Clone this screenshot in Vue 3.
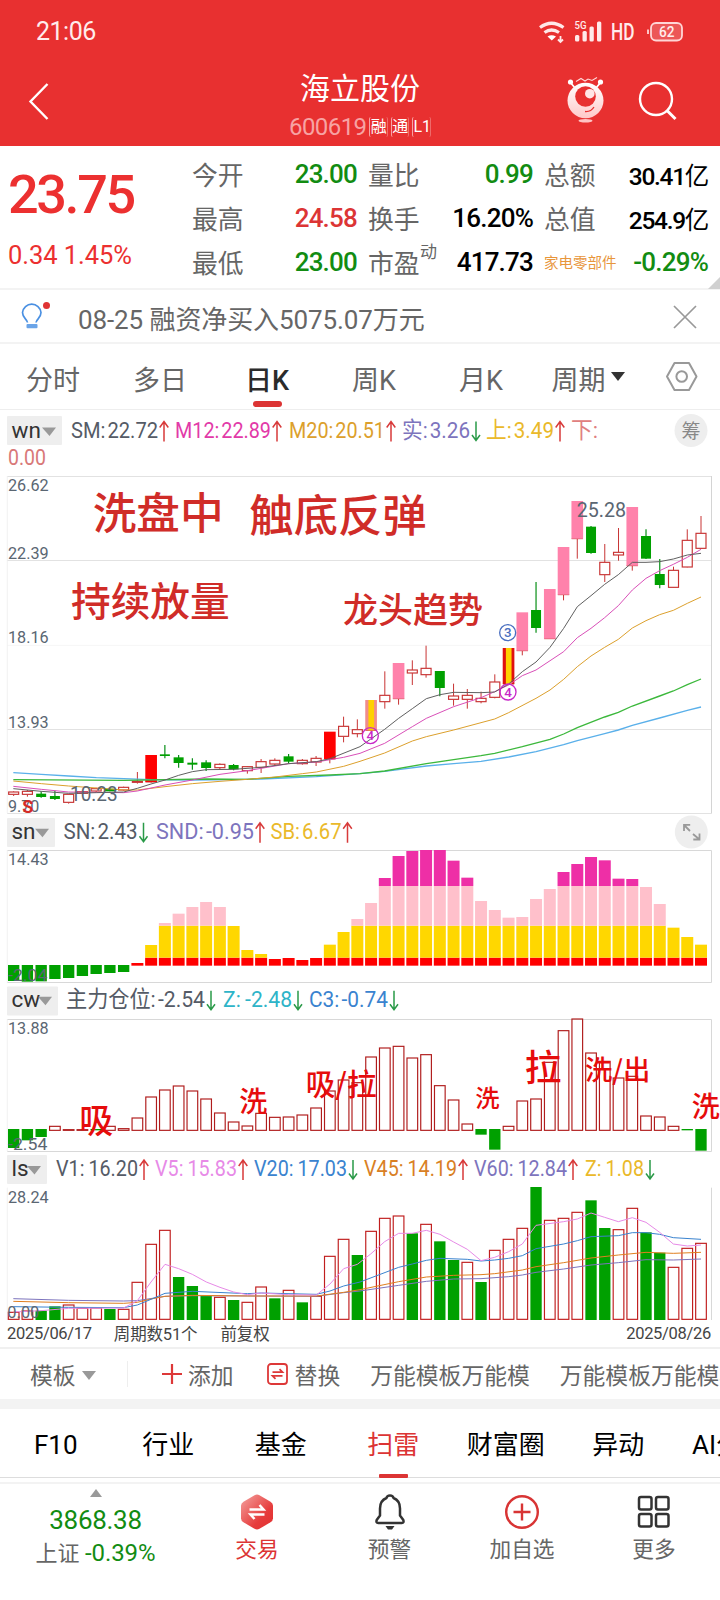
<script setup>
// 三倍密度的画布坐标：3 个单位 = 1px
const STEP = 41.24;
const cx = (i) => 41 + i * STEP;

const quotes = [
  [
    { label: "今开", value: "23.00", tone: "down" },
    { label: "量比", value: "0.99", tone: "down" },
    { label: "总额", value: "30.41", unit: "亿", tone: "flat" },
  ],
  [
    { label: "最高", value: "24.58", tone: "up" },
    { label: "换手", value: "16.20%", tone: "flat" },
    { label: "总值", value: "254.9", unit: "亿", tone: "flat" },
  ],
  [
    { label: "最低", value: "23.00", tone: "down" },
    { label: "市盈", sup: "动", value: "417.73", tone: "flat" },
    { label: "家电零部件", value: "-0.29%", tone: "down", sector: true },
  ],
];

const periods = ["分时", "多日", "日K", "周K", "月K", "周期"];
const details = ["F10", "行业", "基金", "扫雷", "财富圈", "异动", "AI分析"];

// 指标栏：x 起点，w 文本宽度，dir 箭头方向
const heads = {
  wn: {
    view: "0 410 720 64",
    height: 64,
    name: "wn",
    pill: [7, 416, 55],
    base: 437.5,
    items: [
      { x: 71, w: 87, t: "SM:\u200a22.72", c: "#555b66", dir: "up" },
      { x: 175, w: 96, t: "M12:\u200a22.89", c: "#e23aa8", dir: "up" },
      { x: 289, w: 96, t: "M20:\u200a20.51", c: "#dca02c", dir: "up" },
      { x: 402, w: 68, t: "实:\u200a3.26", c: "#7d74bd", dir: "down" },
      { x: 486, w: 68, t: "上:\u200a3.49", c: "#eab92a", dir: "up" },
      { x: 571, w: 27, t: "下:", c: "#e08080" },
    ],
  },
  sn: {
    view: "0 814 720 35",
    height: 35,
    name: "sn",
    pill: [7, 818, 48],
    base: 838.7,
    items: [
      { x: 63.5, w: 74, t: "SN:\u200a2.43", c: "#555b66", dir: "down" },
      { x: 156, w: 98, t: "SND:\u200a-0.95", c: "#7d74bd", dir: "up" },
      { x: 270.5, w: 71, t: "SB:\u200a6.67", c: "#eab92a", dir: "up" },
    ],
  },
  cw: {
    view: "0 984 720 34",
    height: 34,
    name: "cw",
    pill: [7, 986.5, 51],
    base: 1006.7,
    items: [
      { x: 66, w: 139, t: "主力仓位:\u200a-2.54", c: "#555b66", dir: "down" },
      { x: 223, w: 69, t: "Z:\u2009-2.48", c: "#2eb4c8", dir: "down" },
      { x: 309, w: 79, t: "C3:\u200a-0.74", c: "#3a83cf", dir: "down" },
    ],
  },
  ls: {
    view: "0 1153 720 34",
    height: 34,
    name: "ls",
    pill: [7, 1155, 40],
    base: 1176,
    items: [
      { x: 56, w: 82, t: "V1:\u200916.20", c: "#555b66", dir: "up" },
      { x: 155, w: 82, t: "V5:\u200915.83", c: "#e78ae7", dir: "up" },
      { x: 254, w: 93, t: "V20:\u200917.03", c: "#3a83cf", dir: "down" },
      { x: 364, w: 93, t: "V45:\u200914.19", c: "#d97f24", dir: "up" },
      { x: 474, w: 93, t: "V60:\u200912.84", c: "#7d74bd", dir: "up" },
      { x: 585, w: 59, t: "Z:\u20091.08", c: "#eab92a", dir: "down" },
    ],
  },
};

// u 阳线 d 阴线 r 涨停 p 连板 y 信号 —— [最高, 实体上, 实体下, 最低, 类型]
const candles = [
  [964, 966, 973, 978, "u"], [960, 964, 973, 980, "u"], [964, 971, 981, 983, "d"],
  [962, 978, 987, 990, "d"], [972, 973, 997, 1001, "u"], [965, 965, 970, 971, "u"],
  [953, 956, 963, 968, "u"], [955, 956, 964, 964, "d"], [950, 952, 960, 962, "u"],
  [906, 934, 937, 941, "u"], [855, 855, 936, 938, "r"], [825, 853, 858, 865, "d"],
  [855, 862, 879, 893, "d"], [865, 878, 884, 899, "d"], [871, 877, 894, 903, "d"],
  [880, 883, 893, 899, "u"], [882, 885, 898, 901, "d"], [888, 890, 902, 911, "u"],
  [867, 875, 892, 909, "u"], [865, 871, 882, 887, "u"], [852, 859, 875, 882, "d"],
  [867, 871, 881, 884, "u"], [858, 865, 876, 888, "u"], [785, 785, 867, 880, "r"],
  [740, 769, 799, 817, "u"], [748, 779, 791, 802, "u"], [690, 690, 781, 784, "y"],
  [604, 676, 695, 716, "u"], [579, 579, 686, 704, "p"], [571, 600, 609, 645, "u"],
  [527, 595, 614, 623, "u"], [603, 603, 654, 679, "d"], [641, 678, 688, 707, "u"],
  [657, 676, 688, 716, "u"], [665, 685, 695, 700, "u"], [613, 636, 682, 685, "u"],
  [534, 534, 642, 642, "yr"], [427, 427, 542, 556, "p"], [336, 420, 474, 488, "d"],
  [357, 357, 506, 506, "p"], [231, 231, 374, 391, "p"], [93, 93, 206, 266, "p"],
  [168, 170, 249, 251, "d"], [222, 277, 314, 336, "u"], [174, 247, 255, 272, "u"],
  [111, 111, 287, 302, "p"], [178, 198, 266, 267, "d"], [267, 312, 345, 355, "d"],
  [290, 301, 352, 353, "u"], [178, 211, 291, 292, "u"], [138, 190, 235, 237, "u"],
].map(([high, top, bottom, low, kind], i) => ({ x: cx(i), high, top, bottom, low, kind }));

const fills = { r: "#ff0000", p: "#ff82ab", y: "#f08c8c", yr: "#e01010" };

const averages = [
  {
    c: "#5ab0ea", w: 4,
    p: "40,908 124,913 206,918 289,923 371,926 453,929 577,930 701,929 784,927 949,920 1080,911 1154,904 1279,888 1361,881 1443,874 1526,861 1608,845 1691,824 1732,812 1814,791 1855,780 1897,766 1979,744 2062,721 2103,711",
  },
  {
    c: "#3cb83c", w: 4,
    p: "40,929 371,931 619,927 742,928 866,919 990,915 1080,911 1154,903 1279,881 1361,869 1443,857 1484,850 1567,830 1650,808 1691,792 1732,773 1814,741 1855,727 1897,708 1979,678 2020,663 2062,644 2103,627",
  },
  {
    c: "#dca02c", w: 3,
    p: "40,933 124,941 206,948 289,954 371,960 412,960 495,950 577,941 660,934 742,928 825,921 907,911 949,906 1031,889 1080,874 1154,849 1237,813 1279,800 1361,780 1484,747 1526,728 1608,685 1650,660 1691,628 1732,590 1773,558 1814,532 1855,508 1897,474 1938,452 1979,434 2020,421 2062,400 2103,381",
  },
  {
    c: "#d94fb8", w: 3,
    p: "40,949 124,958 206,966 371,968 412,963 495,945 577,930 660,913 742,902 825,888 866,881 949,876 1031,862 1080,850 1154,820 1237,770 1279,745 1361,710 1443,683 1484,665 1526,645 1567,617 1608,600 1691,545 1732,503 1773,475 1814,443 1855,407 1897,360 1938,325 1979,302 2020,283 2062,262 2103,238",
  },
  {
    c: "#606060", w: 3,
    p: "40,956 124,964 206,970 289,968 371,966 412,955 453,942 495,930 536,916 577,905 619,899 701,898 784,892 866,881 949,875 990,866 1080,830 1111,808 1154,778 1196,745 1237,716 1279,686 1320,674 1361,667 1443,668 1484,666 1526,642 1567,605 1608,576 1650,532 1691,475 1732,410 1773,377 1814,343 1855,314 1897,277 1938,277 1979,275 2020,267 2062,255 2103,250",
  },
];

const prices = [
  { y: 62, t: "26.62" },
  { y: 266, t: "22.39" },
  { y: 519, t: "18.16" },
  { y: 773, t: "13.93" },
];

const slogans = [
  { x: 278, y: 177, s: 131, t: "洗盘中" },
  { x: 748, y: 185, s: 133, t: "触底反弹" },
  { x: 213, y: 437, s: 119, t: "持续放量" },
  { x: 1029, y: 458, s: 105, t: "龙头趋势" },
];

// 分层柱：红、黄、粉、洋红
const layers = [
  [443, 467, "#ff0000"],
  [347, 443, "#ffd700"],
  [228, 347, "#ffc0cb"],
  [0, 228, "#ee2fa6"],
];
const snTops = [
  459, 405, 339, 311, 291, 276, 291, 348, 420, 432, 447, 444, 450, 444, 404, 366, 327, 279, 204,
  138, 123, 120, 120, 152, 203, 273, 300, 323, 321, 267, 237, 186, 162, 141, 151, 206, 207, 231,
  282, 353, 381, 404,
];
const snLows = [513, 515, 514, 507, 504, 498, 492, 489, 486];
const snBars = snTops.flatMap((top, i) =>
  layers
    .filter(([, b]) => top < b)
    .map(([a, b, c]) => ({ x: cx(i + 9) - 18, y: Math.max(a, top), b, c })),
);

// 负数表示绿色下挂柱
const cwBars = [
  -1014, -991, -981, 949, 959, 959, -961, 949, 956, 924, 861, 840, 828, 843, 867, 909, 936, 948,
  910, 922, 921, 915, 894, 843, 810, 818, 741, 714, 709, 744, 734, 827, 870, 942, -974, -1019, 949,
  873, 867, 757, 662, 627, 729, 754, 804, 799, 918, 921, 949, -961, -1022,
].map((v, i) => ({ x: cx(i), v: Math.abs(v), down: v < 0 }));

const cwNotes = [
  { x: 238, y: 970, s: 102, t: "吸" },
  { x: 718, y: 907, s: 84, t: "洗" },
  { x: 917, y: 856, s: 89, t: "吸/拉" },
  { x: 1426, y: 891, s: 73, t: "洗" },
  { x: 1574, y: 812, s: 110, t: "拉" },
  { x: 1755, y: 811, s: 82, t: "洗/出" },
  { x: 2075, y: 921, s: 84, t: "洗" },
];

// 负数表示阴量
const volumes = [
  487, 483, -482, -469, 465, 475, 474, -477, 478, 397, 283, 241, -381, -408, -438, 442, -450, 457,
  411, -445, 421, -457, 439, 319, 268, -315, 244, 205, 198, -250, 223, -274, -330, 337, -396, 301,
  268, 235, -111, 211, 205, 187, -151, -234, 239, 175, -247, -308, 352, 295, 280,
].map((v, i) => ({ x: cx(i), v: Math.abs(v), down: v < 0 }));

const volumeLines = [
  {
    c: "#7d74bd",
    p: "40,446 206,451 371,453 412,452 495,439 577,437 949,439 1031,428 1080,423 1196,406 1279,394 1361,387 1443,386 1526,380 1567,375 1608,367 1691,357 1773,345 1855,338 1938,329 2020,330 2103,327",
  },
  {
    c: "#e08020",
    p: "40,454 206,458 371,460 412,457 453,447 495,439 577,436 742,438 949,438 1031,427 1080,419 1196,395 1279,381 1361,376 1443,374 1484,371 1567,360 1608,350 1691,338 1773,324 1855,315 1938,307 2020,310 2103,307",
  },
  {
    c: "#3a83cf",
    p: "40,470 206,472 371,473 412,465 453,448 495,430 577,424 742,431 784,429 949,433 990,423 1031,408 1080,396 1196,352 1237,342 1279,331 1320,325 1402,328 1443,333 1484,330 1526,325 1567,317 1608,296 1691,282 1732,272 1773,260 1855,257 1897,248 1938,248 1979,253 2020,263 2103,268",
  },
  {
    c: "#e78ae7",
    p: "40,486 124,482 206,475 371,474 412,452 453,396 495,343 536,356 577,373 619,396 660,412 701,426 742,434 784,429 866,434 949,435 990,402 1031,356 1072,343 1112,312 1154,275 1196,250 1237,250 1279,241 1320,253 1361,276 1402,298 1443,332 1484,322 1526,305 1567,282 1608,226 1691,215 1732,207 1773,189 1814,202 1855,215 1897,203 1938,217 1979,247 2020,282 2062,288 2103,285",
  },
];

const panels = ["wn", "sn", "cw", "ls"];
</script>

<template>
  <div class="page">
    <header class="top">
      <div class="status">
        <span class="clock">21:06</span>
        <svg class="signals" width="148" height="26" viewBox="538 17 148 26">
          <g fill="none" stroke="#ffe8e8" stroke-width="3.2">
            <path d="M540 26.5Q551.5 18 563.5 26.5" />
            <path d="M544.5 31.5Q551.5 26.5 559 31.5" />
          </g>
          <path d="M547.5 35.5Q551.5 33 556 35.5L551.8 39.5Z" fill="#fff" />
          <path d="M560.5 35v6m-2.500-2.500l2.500 2.500l2.500-2.500" stroke="#ffe8e8" stroke-width="1.800" fill="none" />
          <text x="574.500" y="28" font-size="10" textLength="12" lengthAdjust="spacingAndGlyphs" class="st">5G</text>
          <g fill="#ffeaea">
            <rect x="575" y="34" width="4.300" height="6.500" rx="1.500" />
            <rect x="582.500" y="30" width="4.300" height="10.500" rx="1.500" />
            <rect x="589.500" y="25.500" width="4.300" height="15" rx="1.500" />
            <rect x="597" y="20.500" width="4.300" height="20" rx="1.500" />
          </g>
          <text x="611" y="39" font-size="23.500" textLength="23.500" lengthAdjust="spacingAndGlyphs" class="st">HD</text>
          <rect x="651" y="22" width="31" height="17.500" rx="5" fill="#ffffff30" stroke="#ffd6d6" stroke-width="1.800" />
          <path d="M648 28.500v4.500" stroke="#ffd6d6" stroke-width="1.800" />
          <text x="659" y="36" font-size="14.500" textLength="15.500" lengthAdjust="spacingAndGlyphs" class="st">62</text>
        </svg>
      </div>
      <div class="nav">
        <svg class="back" width="24" height="40" viewBox="0 0 24 40">
          <path d="M19.500 3L2.500 20.500L19.500 38" fill="none" stroke="#fff" stroke-width="2.400" />
        </svg>
        <div class="title">
          <h1>海立股份</h1>
          <p>600619<i>融</i><i>通</i><i>L1</i></p>
        </div>
        <svg class="robot" width="40" height="50" viewBox="567 76 40 50">
          <defs>
            <linearGradient id="egg" x1="0" y1="0" x2="0" y2="1">
              <stop offset="0" stop-color="#fff" />
              <stop offset="1" stop-color="#ffc9c9" />
            </linearGradient>
          </defs>
          <path d="M571 83l5 6M602 83l-5 6" stroke="#fff" stroke-width="1.800" />
          <circle cx="571.500" cy="83" r="2.600" fill="#fff" />
          <circle cx="601.500" cy="83" r="2.600" fill="#fff" />
          <path d="M577 82.500l5-3l4 2.500l3-2l4 1.500l5-3" fill="none" stroke="#ffd9d9" stroke-width="1.100" />
          <ellipse cx="586.500" cy="101.500" rx="18" ry="17.800" fill="url(#egg)" />
          <circle cx="586.500" cy="97.500" r="10.300" fill="#e83030" />
          <circle cx="590.800" cy="94.700" r="4.800" fill="#ffe6e6" />
          <path d="M586 112.500q6 .500 9-4.500" fill="none" stroke="#e83030" stroke-width="1.300" />
          <ellipse cx="586.500" cy="121.800" rx="7" ry="1.700" fill="#ffc4c4" />
        </svg>
        <svg class="search" width="42" height="42" viewBox="0 0 42 42">
          <circle cx="19" cy="19" r="16" fill="none" stroke="#fff" stroke-width="2.400" />
          <path d="M30 30.500l8.500 8.500" stroke="#fff" stroke-width="3" />
        </svg>
      </div>
    </header>

    <section class="quote">
      <div class="price">
        <strong>23.75</strong>
        <span>0.34 1.45%</span>
      </div>
      <div class="table">
        <template v-for="(row, r) in quotes" :key="r">
          <div v-for="cell in row" :key="cell.label" class="cell">
            <span :class="['label', { sector: cell.sector }]">{{ cell.label }}<sup v-if="cell.sup">{{ cell.sup }}</sup></span>
            <span :class="['value', cell.tone, { small: cell.unit }]">{{ cell.value }}<i v-if="cell.unit">{{ cell.unit }}</i></span>
          </div>
        </template>
      </div>
      <i class="corner" />
    </section>

    <section class="notice">
      <svg width="32" height="32" viewBox="20 301 32 32">
        <path d="M27.500 323.500C27 320 22.500 319 22.500 313.500A9.300 9.300 0 0 1 41 313.500C41 319 36.500 320 36 323.500" fill="none" stroke="#4a90e2" stroke-width="1.700" />
        <rect x="26.500" y="325" width="11" height="4.200" rx="1" fill="#6aa4e8" />
        <circle cx="46.500" cy="306.500" r="3.500" fill="#e03434" />
      </svg>
      <p>08-25 融资净买入5075.07万元</p>
      <svg class="close" width="24" height="24" viewBox="0 0 24 24">
        <path d="M1 1L23 23M23 1L1 23" stroke="#999" stroke-width="1.700" />
      </svg>
    </section>

    <nav class="periods">
      <span v-for="p in periods" :key="p" :class="{ on: p === '日K' }">
        {{ p }}<i v-if="p === '周期'" class="caret" />
      </span>
      <svg width="34" height="32" viewBox="0 0 34 32">
        <path d="M9.500 2h14.500l7.500 13.500l-7.500 13.500h-14.500l-7.500-13.500z" fill="none" stroke="#999" stroke-width="2" stroke-linejoin="round" />
        <circle cx="16.700" cy="15.500" r="5.300" fill="none" stroke="#999" stroke-width="2" />
      </svg>
    </nav>

    <template v-for="id in panels" :key="id">
      <svg class="block" width="720" :height="heads[id].height" :viewBox="heads[id].view">
        <rect :x="heads[id].pill[0]" :y="heads[id].pill[1]" :width="heads[id].pill[2]" height="29" rx="1" fill="#eee" />
        <text :x="heads[id].pill[0] + 4.500" :y="heads[id].base" font-size="22.500" fill="#333">{{ heads[id].name }}</text>
        <path
          :transform="`translate(${heads[id].pill[0] + heads[id].pill[2] - 20} ${heads[id].base - 10})`"
          d="M0 0H14L7.500 8.500Z"
          fill="#999"
        />
        <g v-for="it in heads[id].items" :key="it.t">
          <text :x="it.x" :y="heads[id].base" :textLength="it.w" lengthAdjust="spacingAndGlyphs" class="legend" :fill="it.c">{{ it.t }}</text>
          <g v-if="it.dir" :transform="`translate(${it.x + it.w + 6} ${heads[id].base - 6})`" fill="none" stroke-width="1.500">
            <path v-if="it.dir === 'up'" d="M0 10V-10M-4.300-4L0-10L4.300-4" stroke="#d83a3a" />
            <path v-else d="M0-10V9M-4 3.500L0 9L4 3.500" stroke="#2a9a48" />
          </g>
        </g>
        <g v-if="id === 'wn'">
          <text x="8" y="465" textLength="38" lengthAdjust="spacingAndGlyphs" class="legend" fill="#d87878">0.00</text>
          <circle cx="691" cy="430.500" r="16.500" fill="#eee" />
          <text x="681.500" y="438" font-size="19" fill="#888">筹</text>
        </g>
        <g v-if="id === 'sn'">
          <circle cx="691.300" cy="832" r="16.500" fill="#eee" />
          <path d="M690 831l-6-6m0 6v-6.200h6.200M693 834l6.500 5.500m0-6v6h-6.200" fill="none" stroke="#999" stroke-width="1.800" />
        </g>
      </svg>

      <!-- K线主图 -->
      <svg v-if="id === 'wn'" class="block" width="720" height="340" viewBox="0 12 2160 1020">
        <path d="M22 19.500H2135M22 271.500H2135M22 778.500H2135M22 1030.500H2135" stroke="#e2e2e2" stroke-width="3" />
        <path d="M22 526H2135" stroke="#f6f6f6" stroke-width="3" />
        <path d="M22 18V1030" stroke="#ececec" stroke-width="2" />
        <path d="M2134.500 18V1030" stroke="#d4d4d4" stroke-width="3" />
        <text v-for="p in prices" :key="p.t" x="24" :y="p.y" class="axis" textLength="122" lengthAdjust="spacingAndGlyphs">{{ p.t }}</text>
        <text x="24" y="1025" class="axis" textLength="94" lengthAdjust="spacingAndGlyphs">9.70</text>
        <g v-for="(k, i) in candles" :key="i">
          <template v-if="k.kind === 'u'">
            <path :d="`M${k.x} ${k.high}V${k.top}M${k.x} ${k.bottom}V${k.low}`" stroke="#c83434" stroke-width="3" />
            <rect :x="k.x - 15" :y="k.top" width="30" :height="k.bottom - k.top" fill="#fff" stroke="#c83434" stroke-width="3.500" />
          </template>
          <template v-else-if="k.kind === 'd'">
            <path :d="`M${k.x} ${k.high}V${k.low}`" stroke="#008c10" stroke-width="3.500" />
            <rect :x="k.x - 15" :y="k.top" width="30" :height="k.bottom - k.top" fill="#00a000" />
          </template>
          <template v-else>
            <path :d="`M${k.x} ${k.bottom}V${k.low}M${k.x - 17} ${k.bottom}h34`" stroke="#c83434" stroke-width="3" />
            <rect :x="k.x - 17.500" :y="k.top" width="35" :height="k.bottom - k.top" :fill="fills[k.kind]" />
            <rect v-if="k.kind[0] === 'y'" :x="k.x - 8" :y="k.top" width="17" :height="k.bottom - k.top" fill="#ffd000" />
          </template>
        </g>
        <polyline v-for="a in averages" :key="a.c" :points="a.p" fill="none" :stroke="a.c" :stroke-width="a.w" />
        <text x="210" y="993" class="peak" textLength="143" lengthAdjust="spacingAndGlyphs">10.23</text>
        <text x="1730" y="140" class="peak" textLength="148" lengthAdjust="spacingAndGlyphs">25.28</text>
        <text x="67" y="1028" font-size="54" font-weight="700" fill="#d42b27">S</text>
        <text v-for="s in slogans" :key="s.t" :x="s.x" :y="s.y" :font-size="s.s" fill="#d02c28" class="note">{{ s.t }}</text>
        <g fill="none" stroke-width="4">
          <circle cx="1111" cy="797" r="24" stroke="#c828c8" />
          <circle cx="1524" cy="666" r="24" stroke="#c828c8" />
          <circle cx="1523" cy="488" r="24" stroke="#4a6fc0" />
        </g>
        <g font-size="40" font-weight="500" text-anchor="middle">
          <text x="1111" y="811" fill="#c828c8">4</text>
          <text x="1524" y="680" fill="#c828c8">4</text>
          <text x="1523" y="502" fill="#4a6fc0">3</text>
        </g>
      </svg>

      <svg v-if="id === 'sn'" class="block" width="720" height="135" viewBox="0 117 2160 405">
        <path d="M22 121.500H2134.500V517.500H22" fill="none" stroke="#d8d8d8" stroke-width="3" />
        <path d="M22 120V518" stroke="#ececec" stroke-width="2" />
        <text x="24" y="164" class="axis" textLength="122" lengthAdjust="spacingAndGlyphs">14.43</text>
        <rect v-for="(y, i) in snLows" :key="'g' + i" :x="cx(i) - 17" y="465" width="34" :height="y - 465" fill="#00a000" />
        <rect v-for="(b, i) in snBars" :key="i" :x="b.x" :y="b.y" width="36" :height="b.b - b.y" :fill="b.c" />
        <text x="24" y="512" class="axis" textLength="118" lengthAdjust="spacingAndGlyphs">-2.04</text>
      </svg>

      <svg v-if="id === 'cw'" class="block" width="720" height="135" viewBox="0 624 2160 405">
        <path d="M22 628.500H2134.500V1024.500H22" fill="none" stroke="#d8d8d8" stroke-width="3" />
        <path d="M22 628V1024" stroke="#ececec" stroke-width="2" />
        <text x="24" y="671" class="axis" textLength="122" lengthAdjust="spacingAndGlyphs">13.88</text>
        <template v-for="(b, i) in cwBars" :key="i">
          <rect v-if="b.down" :x="b.x - 17" y="957" width="34" :height="b.v - 957" fill="#00a000" />
          <rect v-else :x="b.x - 16" :y="b.v" width="32" :height="961 - b.v" fill="none" stroke="#b01c1c" stroke-width="3.500" />
        </template>
        <text x="24" y="1019" class="axis" textLength="118" lengthAdjust="spacingAndGlyphs">-2.54</text>
        <text v-for="(n, i) in cwNotes" :key="'n' + i" :x="n.x" :y="n.y" :font-size="n.s" fill="#e60c0c" class="note">{{ n.t }}</text>
      </svg>

      <svg v-if="id === 'ls'" class="block" width="720" height="133" viewBox="0 111 2160 399">
        <path d="M22 113V510" stroke="#ececec" stroke-width="2" />
        <path d="M2134.500 113V510" stroke="#d8d8d8" stroke-width="3" />
        <text x="24" y="159" class="axis" textLength="122" lengthAdjust="spacingAndGlyphs">28.24</text>
        <template v-for="(b, i) in volumes" :key="i">
          <rect v-if="b.down" :x="b.x - 17" :y="b.v" width="34" :height="510 - b.v" fill="#00a000" />
          <rect v-else :x="b.x - 16" :y="b.v" width="32" :height="508 - b.v" fill="#fff" stroke="#c01e1e" stroke-width="3.500" />
        </template>
        <polyline v-for="l in volumeLines" :key="l.c" :points="l.p" fill="none" :stroke="l.c" stroke-width="3" />
        <text x="22" y="504" class="axis" textLength="96" lengthAdjust="spacingAndGlyphs">0.00</text>
      </svg>
    </template>

    <div class="dates">
      <span class="from">2025/06/17</span>
      <span class="count">周期数51个</span>
      <span>前复权</span>
      <span class="to">2025/08/26</span>
    </div>

    <div class="templates">
      <span class="pick">模板<i class="tri" /></span>
      <span class="add">
        <svg width="20" height="20" viewBox="0 0 20 20">
          <path d="M10 0V20M0 10H20" stroke="#dd3838" stroke-width="2.200" />
        </svg>
        添加
      </span>
      <span class="swap">
        <svg width="21" height="22" viewBox="0 0 21 22">
          <rect x="1" y="1" width="19" height="20" rx="3" fill="none" stroke="#dd3838" stroke-width="1.800" />
          <path d="M5.500 9.200H15.500L12.500 6.200M15.500 12.800H5.500L8.500 15.800" fill="none" stroke="#dd3838" stroke-width="1.700" />
        </svg>
        替换
      </span>
      <span class="tpl">万能模板万能模</span>
      <span class="tpl">万能模板万能模板</span>
    </div>

    <nav class="details">
      <span v-for="d in details" :key="d" :class="{ on: d === '扫雷', last: d === 'AI分析' }">{{ d }}</span>
    </nav>

    <footer class="bar">
      <div class="index">
        <i class="peek" />
        <b>3868.38</b>
        <p>上证 <em>-0.39%</em></p>
      </div>
      <div class="item hot">
        <svg width="34" height="36" viewBox="0 0 34 36">
          <defs>
            <linearGradient id="hex" x1="0" y1="0" x2="1" y2="1">
              <stop offset="0" stop-color="#f4a3a0" />
              <stop offset="0.650" stop-color="#e63c3c" />
              <stop offset="1" stop-color="#e23030" />
            </linearGradient>
          </defs>
          <path d="M14.500 1.300q2.500-1.400 5 0l11 6.500q2.500 1.500 2.500 4v12.500q0 2.500-2.500 4l-11 6.500q-2.500 1.400-5 0l-11-6.500q-2.500-1.500-2.500-4v-12.500q0-2.500 2.500-4z" fill="url(#hex)" />
          <path d="M9.500 15.500H23.500L19.500 11M24.500 20.500H10.500L14.500 25" fill="none" stroke="#fff" stroke-width="2.500" />
        </svg>
        <span>交易</span>
      </div>
      <div class="item">
        <svg width="34" height="36" viewBox="0 0 34 36">
          <path d="M17 1.500q3 0 3.500 2.500q6.500 2.500 6.500 10.500v7l3.300 4.500q1 3-1.500 3H5.200q-2.500 0-1.500-3L7 21.500v-7q0-8 6.500-10.500q.500-2.500 3.500-2.500z" fill="none" stroke="#333" stroke-width="2.500" stroke-linejoin="round" />
          <path d="M12.500 32h9l-2.500 3.500h-4z" fill="#333" />
        </svg>
        <span>预警</span>
      </div>
      <div class="item">
        <svg width="36" height="36" viewBox="0 0 36 36">
          <circle cx="18" cy="18" r="15.800" fill="none" stroke="#d83434" stroke-width="2.400" />
          <path d="M18 9.500V26.500M9.500 18H26.500" stroke="#d83434" stroke-width="2.400" />
        </svg>
        <span>加自选</span>
      </div>
      <div class="item">
        <svg width="34" height="36" viewBox="0 0 34 36">
          <g fill="none" stroke="#333" stroke-width="2.500">
            <rect x="2" y="3.100" width="12.500" height="12.500" rx="2" />
            <rect x="19" y="3.100" width="12.500" height="12.500" rx="2" />
            <rect x="2" y="20" width="12.500" height="12.500" rx="2" />
            <rect x="19" y="20" width="12.500" height="12.500" rx="2" />
          </g>
        </svg>
        <span>更多</span>
      </div>
    </footer>
  </div>
</template>

<style>
body {
  margin: 0;
  background: #fff;
}
</style>

<style scoped>
.page {
  width: 720px;
  height: 1600px;
  overflow: hidden;
  background: #fff;
  color: #666;
  font-family: Roboto, "Noto Sans CJK SC", sans-serif;
  white-space: nowrap;
}

h1,
p {
  margin: 0;
  font-weight: 400;
}

i,
em {
  font-style: normal;
}

svg {
  display: block;
  flex: none;
}

.top {
  height: 146px;
  background: #e83030;
  color: #fff;
}

.status {
  display: flex;
  justify-content: space-between;
  align-items: center;
  height: 60px;
  padding: 2px 34px 0 36px;
  box-sizing: border-box;
}

.signals {
  overflow: visible;
}

.clock {
  color: #ffecec;
  font-size: 25px;
  letter-spacing: -0.5px;
}

.st {
  fill: #ffecec;
  font-weight: 500;
}

.nav {
  display: flex;
  align-items: center;
  height: 82px;
}

.back {
  margin: -1px 0 0 28px;
}

.title {
  flex: 1;
  margin: 14px 0 0 102px;
  text-align: center;
}

.title h1 {
  font-size: 30px;
  line-height: 38px;
}

.title p {
  display: flex;
  justify-content: center;
  align-items: center;
  gap: 3px;
  color: #f7a3a3;
  font-size: 24px;
  line-height: 38px;
  letter-spacing: -0.6px;
}

.title i {
  width: 18.5px;
  height: 20px;
  box-sizing: border-box;
  border-left: 1px solid #f7a3a3;
  border-right: 1px solid #ee6a6a;
  border-radius: 2px;
  color: #fff;
  font-size: 16px;
  line-height: 19px;
  letter-spacing: 0;
}

.robot {
  margin: -2px 31px 0 0;
}

.search {
  margin: -1px 41px 0 0;
}

.quote {
  position: relative;
  display: flex;
  height: 144px;
  box-sizing: border-box;
  border-bottom: 2px solid #f3f3f3;
}

.price {
  width: 192px;
  padding-left: 8px;
  box-sizing: border-box;
  color: #ec3030;
}

.price strong {
  display: block;
  margin-top: 18px;
  font-size: 54px;
  font-weight: 500;
  line-height: 62px;
  letter-spacing: -2.4px;
}

.price span {
  display: block;
  margin-top: 14px;
  font-size: 25.5px;
  line-height: 30px;
  letter-spacing: -0.05px;
}

.table {
  display: grid;
  grid-template-columns: 165px 165px 164px;
  grid-template-rows: repeat(3, 44px);
  column-gap: 11px;
  padding-top: 7px;
}

.cell {
  display: flex;
  justify-content: space-between;
  align-items: center;
}

.label {
  position: relative;
  top: -2px;
  font-size: 25.8px;
}

.label sup {
  position: absolute;
  left: 52px;
  top: -3px;
  font-size: 17px;
  line-height: 24px;
}

.label.sector {
  color: #e8963c;
  font-size: 14.5px;
}

.value {
  position: relative;
  top: -1px;
  font-size: 26px;
  font-weight: 500;
  letter-spacing: -0.8px;
}

.small {
  font-size: 24.5px;
  letter-spacing: -1.3px;
}

.small i {
  font-weight: 400;
  font-size: 24.5px;
}

.up {
  color: #dc3535;
}

.down {
  color: #128c12;
}

.flat {
  color: #000;
}

.corner {
  position: absolute;
  right: 0;
  bottom: -1px;
  border-left: 12px solid transparent;
  border-bottom: 12px solid #d0d0d0;
}

.notice {
  display: flex;
  align-items: center;
  height: 54px;
  padding: 0 23px 0 20px;
  box-sizing: border-box;
  border-bottom: 2px solid #f3f3f3;
}

.notice p {
  flex: 1;
  margin: 2px 0 0 26px;
  font-size: 26px;
  letter-spacing: -0.1px;
}

.close {
  margin-top: 2px;
}

.periods {
  display: grid;
  grid-template-columns: repeat(6, 107px) 78px;
  align-items: center;
  height: 66px;
  box-sizing: border-box;
  border-bottom: 1px solid #eee;
}

.periods span {
  position: relative;
  display: flex;
  justify-content: center;
  align-items: center;
  height: 65px;
  padding: 3px 1px 0 0;
  box-sizing: border-box;
  font-size: 27px;
}

.periods .on {
  color: #2b2b2b;
  font-weight: 500;
}

.periods .on::after {
  content: "";
  position: absolute;
  left: 39px;
  bottom: 2px;
  width: 29px;
  height: 6px;
  border-radius: 3px;
  background: #dc3434;
}

.caret {
  margin: -3px 0 0 5px;
  border: 7.5px solid transparent;
  border-top: 9px solid #333;
  border-bottom: 0;
}

.periods svg {
  margin: 1px 0 0 23px;
}

.block {
  overflow: visible;
  font-family: Roboto, "Noto Sans CJK SC", sans-serif;
}

.legend {
  font-size: 22.5px;
}

.axis {
  fill: #5a6672;
  font-size: 50px;
}

.peak {
  fill: #5a6672;
  font-size: 60px;
}

.note {
  font-family: "Noto Sans CJK SC", sans-serif;
  font-weight: 500;
}

.dates {
  display: flex;
  align-items: center;
  height: 29px;
  padding: 0 9px 1px 7px;
  box-sizing: border-box;
  border-bottom: 2px solid #f0f0f0;
  color: #444;
  font-size: 16.5px;
  letter-spacing: -0.15px;
}

.from,
.to {
  letter-spacing: -0.3px;
}

.count {
  margin: 0 23px 0 22px;
}

.to {
  margin-left: auto;
}

.templates {
  display: flex;
  align-items: center;
  height: 50px;
  font-size: 22.8px;
}

.templates span {
  display: flex;
  align-items: center;
  flex: none;
}

.pick {
  width: 128px;
  height: 26px;
  padding-left: 30px;
  box-sizing: border-box;
  border-right: 1px solid #eee;
}

.tri {
  margin: 3px 0 0 6px;
  border: 7px solid transparent;
  border-top: 9px solid #999;
  border-bottom: 0;
}

.add {
  gap: 6px;
  margin-left: 34px;
}

.swap {
  gap: 7px;
  margin-left: 33px;
}

.tpl {
  margin-left: 30px;
}

.details {
  display: grid;
  grid-template-columns: repeat(7, 112.5px);
  height: 79px;
  padding-top: 10px;
  box-sizing: border-box;
  border-bottom: 1px solid #ddd;
  background: linear-gradient(#f3f3f3 10px, #fff 10px);
}

.details span {
  position: relative;
  padding: 2px 1px 0 0;
  color: #000;
  font-size: 26px;
  line-height: 68px;
  text-align: center;
}

.details .on {
  color: #dc3434;
}

.details .on::after {
  content: "";
  position: absolute;
  left: 41px;
  bottom: 1px;
  width: 29px;
  height: 4px;
  border-radius: 1px;
  background: #dc3434;
}

.details .last {
  padding-left: 17px;
  text-align: left;
}

.bar {
  display: grid;
  grid-template-columns: 191px 132px 133px 132px 132px;
  margin-top: 4px;
  border-top: 2px solid #f3f3f3;
}

.index {
  text-align: center;
}

.peek {
  display: block;
  width: 0;
  margin: 5px auto 0;
  border: 6.5px solid transparent;
  border-bottom: 8px solid #999;
  border-top: 0;
}

.index b {
  display: block;
  margin-top: 8px;
  color: #128c12;
  font-size: 26px;
  font-weight: 400;
  line-height: 30px;
  letter-spacing: -0.3px;
}

.index p {
  margin-top: 2px;
  font-size: 22px;
  line-height: 32px;
}

.index em {
  color: #128c12;
  font-size: 24px;
  letter-spacing: -0.1px;
}

.item {
  display: flex;
  flex-direction: column;
  align-items: center;
  padding-top: 10px;
  font-size: 21.7px;
}

.item span {
  margin-top: 4px;
  line-height: 32px;
}

.hot {
  color: #dc3434;
}
</style>
